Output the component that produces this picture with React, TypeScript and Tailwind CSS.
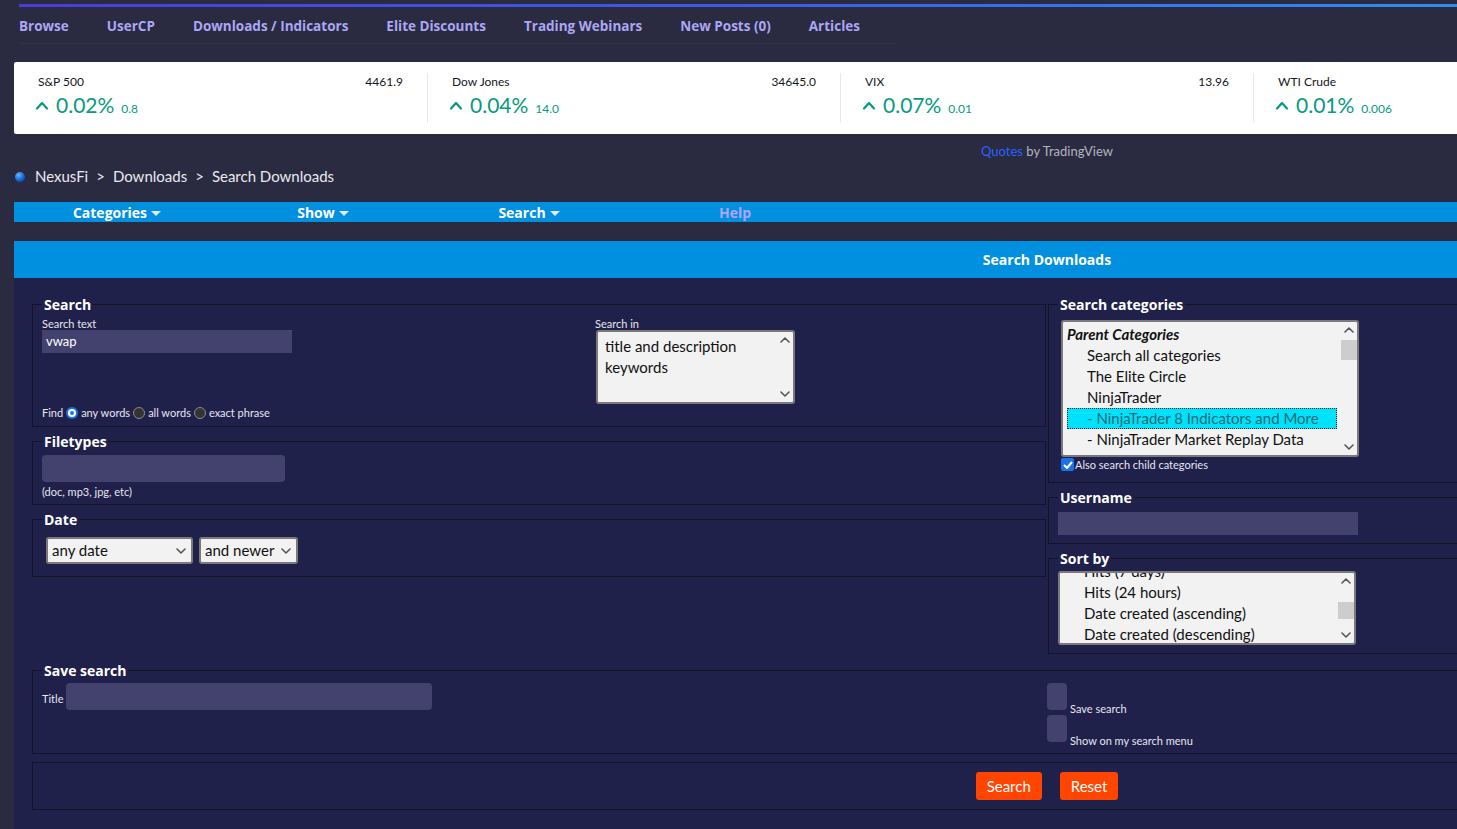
import React from 'react';

const navItems = ['Browse', 'UserCP', 'Downloads / Indicators', 'Elite Discounts', 'Trading Webinars', 'New Posts (0)', 'Articles'];

const tickers = [
  { name: 'S&P 500', value: '4461.9', pct: '0.02%', chg: '0.8' },
  { name: 'Dow Jones', value: '34645.0', pct: '0.04%', chg: '14.0' },
  { name: 'VIX', value: '13.96', pct: '0.07%', chg: '0.01' },
  { name: 'WTI Crude', value: '', pct: '0.01%', chg: '0.006' },
];

function Chevron({ dir = 'down', className = '' }: { dir?: 'up' | 'down'; className?: string }) {
  return (
    <svg width="10" height="6" viewBox="0 0 10 6" className={className}>
      <polyline
        points={dir === 'up' ? '1,5 5,1 9,5' : '1,1 5,5 9,1'}
        fill="none"
        stroke="#555"
        strokeWidth="1.6"
        strokeLinecap="round"
        strokeLinejoin="round"
      />
    </svg>
  );
}

function Caret() {
  return <span className="inline-block w-0 h-0 border-l-[5px] border-r-[5px] border-t-[5px] border-l-transparent border-r-transparent border-t-[#e8e8e8] ml-[4px] mt-[2px]" />;
}

// fake native listbox with a scroll track on the right
function ListBox({ className, children, thumb }: { className: string; children: React.ReactNode; thumb?: string }) {
  return (
    <div className={`relative overflow-hidden bg-[#f2f2f2] border-2 border-[#7a7a7a] rounded-[3px] text-[15px] text-[#111] ${className}`}>
      <div className="pr-[20px]">{children}</div>
      <div className="absolute top-0 right-0 bottom-0 w-[16px] flex flex-col items-center justify-between py-[5px]">
        <Chevron dir="up" />
        <Chevron dir="down" />
      </div>
      {thumb && <div className={`absolute right-0 w-[16px] bg-[#cdcdcd] ${thumb}`} />}
    </div>
  );
}

function Fieldset({ legend, className = '', children }: { legend?: string; className?: string; children: React.ReactNode }) {
  return (
    <fieldset className={`border border-[#13132a] px-[9px] ${className}`}>
      {legend && (
        <legend className="px-[2px] font-['Open_Sans',sans-serif] text-[14px] font-bold text-white leading-[17px]">{legend}</legend>
      )}
      {children}
    </fieldset>
  );
}

function Radio({ checked }: { checked?: boolean }) {
  return checked ? (
    <span className="w-[12px] h-[12px] rounded-full bg-[#1a73e8] flex items-center justify-center">
      <span className="w-[8px] h-[8px] rounded-full border-2 border-white bg-[#1a73e8]" />
    </span>
  ) : (
    <span className="w-[12px] h-[12px] rounded-full bg-[#333] border border-[#8a8a8a]" />
  );
}

export default function App() {
  return (
    <div className="min-h-screen overflow-hidden bg-[#2a2a41] font-['Lato',sans-serif] text-[#e8e8f0]">
      {/* top gradient line + nav */}
      <div className="pt-[4px] pl-[19px]">
        <div className="h-[3px] bg-gradient-to-r from-[#4a3cd6] via-[#3a5ce0] to-[#2a8ef0]" />
      </div>
      <nav className="flex pl-[19px] h-[37px]">
        {navItems.map((item) => (
          <a
            key={item}
            className="flex items-center pt-[3px] pr-[38px] border-b border-[#303049] font-['Open_Sans',sans-serif] text-[13.5px] font-bold text-[#aaa7f4] leading-none"
          >
            {item}
          </a>
        ))}
      </nav>

      <div className="w-[2080px] pl-[14px]">
        {/* ticker */}
        <div className="mt-[18px] h-[72px] bg-white rounded-[2px] flex">
          {tickers.map((t, i) => (
            <div key={t.name} className="w-[413px] py-[11px]">
              <div className={`h-full px-[24px] pt-[1px] ${i > 0 ? 'border-l border-[#e6e8ee]' : ''}`}>
                <div className="flex justify-between text-[12px] leading-[16px] text-[#131722]">
                  <span>{t.name}</span>
                  <span>{t.value}</span>
                </div>
                <div className="flex items-baseline text-[#089981] mt-[2px]">
                  <svg width="14" height="9" viewBox="0 0 14 9" className="mr-[7px] self-center -ml-[3px]">
                    <polyline points="2,7.5 7,2 12,7.5" fill="none" stroke="#089981" strokeWidth="2.2" strokeLinecap="round" strokeLinejoin="round" />
                  </svg>
                  <span className="text-[21px] leading-[26px]">{t.pct}</span>
                  <span className="ml-[7px] text-[12px]">{t.chg}</span>
                </div>
              </div>
            </div>
          ))}
        </div>

        <div className="text-center text-[13px] leading-[18px] mt-[8px] text-[#b2b5be]">
          <span className="text-[#2962ff]">Quotes</span> by TradingView
        </div>

        {/* breadcrumb */}
        <div className="flex items-center mt-[8px] h-[17px] text-[15px] text-[#e9e9ee]">
          <span className="w-[10px] h-[10px] rounded-full bg-[radial-gradient(circle_at_35%_30%,#6ab4ff,#0a5fd0_60%,#063f99)] ml-[1px] mr-[10px]" />
          <span>NexusFi</span>
          <span className="mx-[8px]">&gt;</span>
          <span>Downloads</span>
          <span className="mx-[8px]">&gt;</span>
          <span>Search Downloads</span>
        </div>

        {/* blue menu bar */}
        <div className="mt-[17px] h-[20px] bg-[#0090df] flex items-center font-['Open_Sans',sans-serif] text-[14px] font-bold">
          {['Categories', 'Show', 'Search'].map((m) => (
            <div key={m} className="w-[206px] flex items-center justify-center text-white">
              {m}
              <Caret />
            </div>
          ))}
          <div className="w-[206px] text-center text-[#b4a3f8]">Help</div>
        </div>

        {/* header */}
        <div className="mt-[19px] h-[37px] bg-[#0090df] flex items-center justify-center font-['Open_Sans',sans-serif] text-[14px] font-bold text-white">
          Search Downloads
        </div>

        {/* content */}
        <div className="bg-[#20214a] pt-[18px] pb-[80px] text-[11px] text-[#e6e6f0]">
          <div className="grid grid-cols-[1033px_1033px]">
            {/* left column */}
            <div className="pl-[18px] pr-[1px] flex flex-col gap-[6px]">
              <Fieldset legend="Search" className="pb-[7px]">
                <div className="grid grid-cols-[553px_1fr] pt-[4px]">
                  <div>
                    <div className="leading-[13px]">Search text</div>
                    <div className="w-[250px] h-[23px] bg-[#43426f] text-[13px] text-white px-[4px] flex items-center">vwap</div>
                  </div>
                  <div>
                    <div className="leading-[13px]">Search in</div>
                    <ListBox className="w-[199px] h-[74px] ml-[1px]">
                      <div className="pl-[7px] pt-[4px] leading-[21px]">
                        <div>title and description</div>
                        <div>keywords</div>
                      </div>
                    </ListBox>
                  </div>
                </div>
                <div className="flex items-center gap-[3px] mt-[2px] leading-[13px]">
                  <span>Find</span>
                  <Radio checked />
                  <span>any words</span>
                  <Radio />
                  <span>all words</span>
                  <Radio />
                  <span>exact phrase</span>
                </div>
              </Fieldset>

              <Fieldset legend="Filetypes" className="pb-[6px]">
                <div className="w-[243px] h-[27px] bg-[#43426f] rounded-[4px] mt-[5px]" />
                <div className="mt-[3px] leading-[13px]">(doc, mp3, jpg, etc)</div>
              </Fieldset>

              <Fieldset legend="Date" className="pb-[12px]">
                <div className="flex gap-[6px] ml-[4px] mt-[9px]">
                  <div className="w-[147px] h-[27px] bg-[#f2f2f2] border-2 border-[#7a7a7a] rounded-[3px] flex items-center justify-between pl-[4px] pr-[5px] text-[15px] text-[#111]">
                    any date
                    <Chevron />
                  </div>
                  <div className="w-[99px] h-[27px] bg-[#f2f2f2] border-2 border-[#7a7a7a] rounded-[3px] flex items-center justify-between pl-[4px] pr-[5px] text-[15px] text-[#111]">
                    and newer
                    <Chevron />
                  </div>
                </div>
              </Fieldset>
            </div>

            {/* right column */}
            <div className="pl-[1px] pr-[18px] flex flex-col gap-[6px]">
              <Fieldset legend="Search categories" className="pb-[11px]">
                <ListBox className="w-[298px] h-[137px] mt-[7px] ml-[3px]" thumb="top-[18px] h-[20px]">
                  <div className="pl-[4px] pt-[3px] leading-[21px]">
                    <div className="font-bold italic leading-[19px] pb-[1px]">Parent Categories</div>
                    <div className="pl-[20px]">Search all categories</div>
                    <div className="pl-[20px]">The Elite Circle</div>
                    <div className="pl-[20px]">NinjaTrader</div>
                    <div className="pl-[20px] bg-[#00e1fc] text-[#1d6b74] outline outline-1 outline-dotted outline-[#222] -outline-offset-1">- NinjaTrader 8 Indicators and More</div>
                    <div className="pl-[20px]">- NinjaTrader Market Replay Data</div>
                    <div className="pl-[20px]">- NinjaTrader 6.5 Indicators</div>
                  </div>
                </ListBox>
                <div className="flex items-center mt-[1px] ml-[3px] leading-[13px]">
                  <span className="w-[13px] h-[13px] rounded-[2px] bg-[#1a73e8] flex items-center justify-center">
                    <svg width="10" height="8" viewBox="0 0 10 8">
                      <polyline points="1,4 4,7 9,1" fill="none" stroke="#fff" strokeWidth="2" />
                    </svg>
                  </span>
                  <span className="ml-[1px]">Also search child categories</span>
                </div>
              </Fieldset>

              <Fieldset legend="Username" className="pb-[8px]">
                <div className="w-[300px] h-[23px] bg-[#43426f] mt-[6px]" />
              </Fieldset>

              <Fieldset legend="Sort by" className="pb-[8px]">
                <ListBox className="w-[298px] h-[74px] mt-[4px]" thumb="top-[29px] h-[17px]">
                  <div className="pl-[24px] -mt-[12px] leading-[21px]">
                    <div>Hits (7 days)</div>
                    <div>Hits (24 hours)</div>
                    <div>Date created (ascending)</div>
                    <div>Date created (descending)</div>
                  </div>
                </ListBox>
              </Fieldset>
            </div>
          </div>

          {/* save search */}
          <div className="px-[18px] mt-[8px] flex flex-col gap-[8px]">
            <Fieldset legend="Save search" className="pb-[11px]">
              <div className="grid grid-cols-[1005px_1fr] mt-[4px]">
                <div className="flex items-center gap-[3px] h-[27px]">
                  <span className="translate-y-[3px]">Title</span>
                  <div className="w-[366px] h-[27px] bg-[#43426f] rounded-[4px]" />
                </div>
                <div className="flex flex-col gap-[5px]">
                  <div className="flex items-end">
                    <span className="w-[20px] h-[27px] bg-[#43426f] rounded-[4px]" />
                    <span className="ml-[3px] leading-[13px] translate-y-[5px]">Save search</span>
                  </div>
                  <div className="flex items-end">
                    <span className="w-[20px] h-[27px] bg-[#43426f] rounded-[4px]" />
                    <span className="ml-[3px] leading-[13px] translate-y-[5px]">Show on my search menu</span>
                  </div>
                </div>
              </div>
            </Fieldset>

            <Fieldset className="py-[9px]">
              <div className="flex justify-center gap-[18px]">
                <button className="h-[28px] px-[11px] bg-[#ff4500] rounded-[3px] text-[15px] text-white">Search</button>
                <button className="h-[28px] px-[11px] bg-[#ff4500] rounded-[3px] text-[15px] text-white">Reset</button>
              </div>
            </Fieldset>
          </div>
        </div>
      </div>
    </div>
  );
}
